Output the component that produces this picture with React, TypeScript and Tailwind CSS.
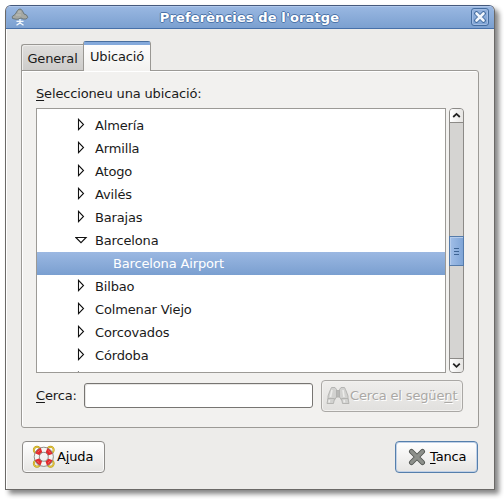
import React from 'react';

type RowProps = { name: string; open?: boolean };

function Row({ name, open }: RowProps) {
  return (
    <div className="flex h-[23px] shrink-0 items-center pl-[38px]">
      <svg width="14" height="15" viewBox="0 0 14 15" className="shrink-0" fill="#fff" stroke="#111" strokeWidth="1.1">
        {open ? <path d="M0.9 4.5H11.1L6 9.6Z" /> : <path d="M3.5 1.3V11.7L8.5 6.5Z" />}
      </svg>
      <span className="ml-[6px]">{name}</span>
    </div>
  );
}

function TreeIcon() {
  return (
    <svg width="18" height="18" viewBox="0 0 18 18">
      <path d="M6.5 2.5L8 1.2H10L11.5 3L13 6L15.5 7L16.8 9.5L15 11H12L10 10L7 11.2H5L1.5 10.5L1.2 8.5L4 6.5L5 5Z" fill="#a5a8a3" stroke="#6c7778" strokeWidth="1" />
      <path d="M7 4H10M5 7H10" stroke="#bec0b8" />
      <path d="M5.5 13.3H12.5M9 11V14.8L5.5 17.2M9 14.8L12.5 17.2" stroke="#f3f8fc" strokeWidth="1.3" fill="none" />
    </svg>
  );
}

function LifeRing() {
  return (
    <svg width="24" height="24" viewBox="0 0 24 24" fill="none">
      {[[5, 5], [18.5, 5], [5, 18.5], [18.5, 18.5]].map(([x, y]) => (
        <g key={`${x}-${y}`}>
          <circle cx={x} cy={y} r="3.2" stroke="#b99a18" strokeWidth="1.9" />
          <circle cx={x} cy={y} r="3.2" stroke="#f2d64b" strokeWidth=".8" />
        </g>
      ))}
      <circle cx="11.8" cy="11.8" r="7" stroke="#f5f5f4" strokeWidth="5" />
      <circle cx="11.8" cy="11.8" r="7" stroke="#e32a2d" strokeWidth="5" strokeDasharray="6 4.996" strokeDashoffset="-2.5" />
      <circle cx="11.8" cy="11.8" r="7.6" stroke="#f37a78" strokeWidth="1" strokeDasharray="2.5 9.438" strokeDashoffset="-4.7" />
      <circle cx="11.8" cy="11.8" r="9.6" stroke="#85807c" strokeWidth=".9" />
      <circle cx="11.8" cy="11.8" r="4.5" stroke="#85807c" strokeWidth=".9" />
    </svg>
  );
}

function Binoculars() {
  return (
    <svg width="24" height="20" viewBox="0 0 24 20" fill="#d2d2d0" stroke="#b0b0ae" strokeWidth=".9">
      <path d="M9.5 4.5H14.5V11H9.5Z" fill="#b8b8b6" />
      <path d="M4.5 3.5L5.5 1.5H9L10.5 3.5V11L8.5 14H2V10L3.5 6Z" />
      <path d="M19.5 3.5L18.5 1.5H15L13.5 3.5V11L15.5 14H22V10L20.5 6Z" />
      <path d="M2 12.5H8.5L7.5 17.5H1ZM15.5 12.5H22L23 17.5H16.5Z" />
      <path d="M6 4L4.5 11M17 4L18 11M3.5 14L3 16.5M18 14L18.5 16.5" stroke="#ececea" strokeWidth="1.6" />
    </svg>
  );
}

function Arrow({ down }: { down?: boolean }) {
  return (
    <svg width="9" height="7" viewBox="0 0 9 7" fill="none" stroke="#222" strokeWidth="1.8">
      <path d={down ? 'M1.2 1.7L4.5 4.8L7.8 1.7' : 'M1.2 5L4.5 1.9L7.8 5'} />
    </svg>
  );
}

export default function App() {
  return (
    <div className="h-[499px] w-[504px] overflow-hidden bg-white pl-[5px] pt-[5px] font-['DejaVu_Sans',sans-serif] text-[13px] leading-[15px] tracking-[-0.15px] text-[#1a1a1a]">
      <div className="flex h-[485px] w-[490px] flex-col overflow-hidden rounded-t-[6px] border border-[#6b6967] border-t-[#45597c] bg-[#edecea] shadow-[4px_4px_5px_rgba(0,0,0,0.48)]">
        <header className="flex h-[23px] shrink-0 items-center border-b border-[#4670a9] bg-linear-to-b from-[#9ab8e2] to-[#7ba0d0] pl-[5px] pr-[5px] shadow-[inset_0_1px_0_#b0c8eb,inset_1px_0_0_#88a9d7]">
          <TreeIcon />
          <h1 className="flex-1 pr-[1px] text-center text-[13px] font-bold tracking-[0.12px] text-white [text-shadow:-1px_0_#4c74a9,1px_0_#4c74a9,0_-1px_#4c74a9,0_1px_#4c74a9]">Preferències de l'oratge</h1>
          <button className="flex size-[18px] items-center justify-center rounded-[3px] border border-[#456d9f] bg-linear-to-b from-[#94b2dd] to-[#7fa4d4] shadow-[inset_0_0_0_1px_#a1bce3]">
            <svg width="12" height="12" viewBox="0 0 12 12"><path d="M2.5 2.5L9.5 9.5M9.5 2.5L2.5 9.5" stroke="#426b9f" strokeWidth="4.4" strokeLinecap="square" /><path d="M2.5 2.5L9.5 9.5M9.5 2.5L2.5 9.5" stroke="#f1f6fc" strokeWidth="2.6" strokeLinecap="round" /></svg>
          </button>
        </header>

        <main className="flex flex-1 flex-col border-l border-white px-[14px] pt-[12px]">
          <nav className="z-10 -mb-px flex h-[30px] items-end">
            <div className="flex h-[27px] w-[62px] items-center justify-center rounded-tl-[3px] border border-r-0 border-[#999793] bg-linear-to-b from-[#dfdedc] to-[#cdccca] pt-[2px] shadow-[inset_1px_1px_0_#eeedeb]">General</div>
            <div className="flex h-[30px] w-[68px] flex-col items-center rounded-t-[3px] border border-b-0 border-[#999793] border-t-[#496f9f] bg-linear-to-b from-white to-[#f2f1ef]">
              <div className="h-[3px] w-full bg-[#84a9db]" />
              <span className="mt-[4px]">Ubicació</span>
            </div>
          </nav>
          <section className="flex h-[358px] w-[458px] flex-col rounded-b-[3px] rounded-tr-[3px] border border-[#9c9a96] bg-[#f2f1ef] px-[14px] pt-[15px] shadow-[inset_1px_1px_0_#fff]">
            <p><u className="underline-offset-2">S</u>eleccioneu una ubicació:</p>
            <div className="mt-[7px] flex h-[265px] shrink-0 gap-[3px]">
              <div className="flex w-[410px] flex-col overflow-hidden border border-[#9c9a96] bg-white pt-[5px]">
                {['Almería', 'Armilla', 'Atogo', 'Avilés', 'Barajas'].map((n) => <Row key={n} name={n} />)}
                <Row name="Barcelona" open />
                <div className="flex h-[23px] shrink-0 items-center bg-linear-to-b from-[#9bb8e2] to-[#7a9fd0] pl-[76px] text-white">Barcelona Airport</div>
                {['Bilbao', 'Colmenar Viejo', 'Corcovados', 'Córdoba', ''].map((n) => <Row key={n} name={n} />)}
              </div>
              <div className="flex w-[15px] flex-col rounded-[4px] border border-[#8c8a87] bg-[#d5d4d2]">
                <div className="flex h-[14px] items-center justify-center rounded-t-[3px] border-b border-[#8c8a87] bg-linear-to-r from-white to-[#e6e5e3]"><Arrow /></div>
                <div className="-mx-px mt-[113px] flex h-[30px] flex-col items-center justify-center gap-[2px] border border-[#557baa] bg-linear-to-r from-[#a1bee7] to-[#7fa5d7] shadow-[inset_1px_1px_0_#b5ccec]">
                  <i className="h-px w-[5px] bg-[#3e6494]" /><i className="h-px w-[5px] bg-[#3e6494]" /><i className="h-px w-[5px] bg-[#3e6494]" />
                </div>
                <div className="mt-auto flex h-[14px] items-center justify-center rounded-b-[3px] border-t border-[#8c8a87] bg-linear-to-r from-white to-[#e6e5e3]"><Arrow down /></div>
              </div>
            </div>
            <div className="mt-[7px] flex h-[32px] items-center">
              <label className="mb-px w-[48px] shrink-0"><u className="underline-offset-2">C</u>erca:</label>
              <input aria-label="Cerca" className="mb-px h-[25px] w-[229px] rounded-[3px] border border-[#777572] bg-white shadow-[inset_1px_1px_0_#e8e7e5]" />
              <button disabled className="ml-[8px] flex h-[32px] w-[142px] shrink-0 items-center rounded-[4px] border border-[#aaa8a5] bg-linear-to-b from-[#efeeec] to-[#e1e0de] pl-[4px] text-[#aaa8a5] shadow-[inset_0_0_0_1px_#f2f1ef] [text-shadow:1px_1px_0_white]">
                <Binoculars /><span className="mb-px whitespace-nowrap">Cerca el següe<u className="underline-offset-2">n</u>t</span>
              </button>
            </div>
          </section>
          <footer className="mt-[13px] flex w-[458px] justify-between pl-px pr-px">
            <button className="flex h-[32px] w-[83px] items-center rounded-[4px] border border-[#8d8b88] bg-linear-to-b from-white to-[#e6e5e3] pl-[9px] text-black shadow-[inset_0_0_0_1px_#fafafa]">
              <LifeRing /><span className="mb-px ml-[1px]">A<u className="underline-offset-2">j</u>uda</span>
            </button>
            <button className="flex h-[32px] w-[83px] items-center rounded-[4px] border border-[#557fac] bg-linear-to-b from-white to-[#e6e5e3] pl-[12px] text-black shadow-[inset_0_0_0_1px_#c1d1e7]">
              <svg width="18" height="18" viewBox="0 0 18 18" strokeLinecap="round"><path d="M3.5 3.5L14.5 14.5M14.5 3.5L3.5 14.5" stroke="#535652" strokeWidth="5" /><path d="M3.5 3.5L14.5 14.5M14.5 3.5L3.5 14.5" stroke="#8d908b" strokeWidth="3.2" /></svg>
              <span className="mb-px ml-[4px]"><u className="underline-offset-2">T</u>anca</span>
            </button>
          </footer>
        </main>
      </div>
    </div>
  );
}
